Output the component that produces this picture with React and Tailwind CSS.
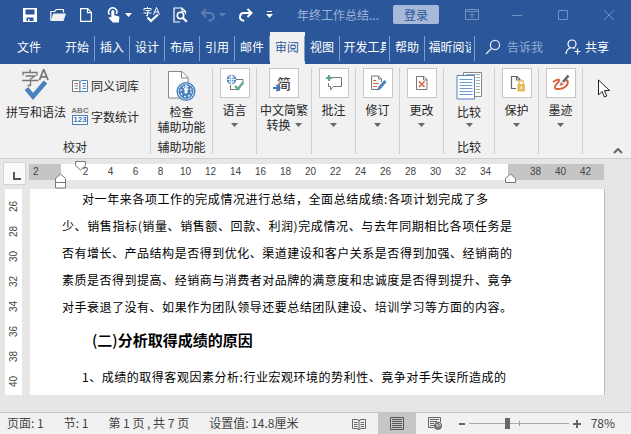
const tabs = [
  { name: '开始' },
  { name: '插入' },
  { name: '设计' },
  { name: '布局' },
  { name: '引用' },
  { name: '邮件' },
  { name: '审阅', active: true },
  { name: '视图' },
  { name: '开发工具', wide: true },
  { name: '帮助' },
  { name: '福昕阅读器', wide: true },
];

const rulerMarks = [2, 4, 6, 8, 10, 12, 14, 16, 18, 20, 22, 24, 26, 28, 30, 32, 34];
const rulerMarksRight = [38, 40, 42];
const sideMarks = [26, 28, 30, 32, 34, 36, 38, 40];

function Caret({ className = '' }) {
  return (
    <svg viewBox="0 0 7 4" className={`w-[7px] h-1 shrink-0 ${className}`} fill="currentColor" aria-hidden="true">
      <path d="M0 0h7L3.5 4z" />
    </svg>
  );
}

/* Title bar icons */

function SaveIcon() {
  return (
    <svg viewBox="0 0 16 16" className="size-4">
      <path d="M1 1h14v14H1z" fill="#fff" />
      <path d="M3.5 2.5h9v5h-9zM4.5 10.5h7V14h-4v-2H6v2H4.5z" fill="#2b579a" />
    </svg>
  );
}

function FolderIcon() {
  return (
    <svg viewBox="0 0 16 16" className="size-4">
      <path d="M.8 13.5V4.5h4l1.5-2h7.2v3" fill="none" stroke="#fff" strokeWidth="1.2" />
      <path d="M3.2 6.5H16L13.5 14H.8z" fill="#f1f1f1" />
    </svg>
  );
}

function NewIcon() {
  return (
    <svg viewBox="0 0 16 16" className="size-4" fill="none" stroke="#fff" strokeWidth="1.2">
      <path d="M2.6 1.6h7l3.8 3.8v9H2.6z" />
      <path d="M9.5 1.6v4h4" />
    </svg>
  );
}

function TouchIcon() {
  return (
    <svg viewBox="0 0 16 16" className="size-4">
      <path d="M3.5 7.5A4.1 4.1 0 1 1 10.3 7" fill="none" stroke="#fff" strokeWidth="1.5" />
      <path d="M5.3 4.6a1.5 1.5 0 0 1 3 0v3.6l4 1c.8.2 1.2.8 1.1 1.6l-.6 4.7H6.8L2.5 10.8c.6-1 1.6-1 2.8-.2z" fill="#fff" />
    </svg>
  );
}

function SpellSmallIcon() {
  return (
    <svg viewBox="0 0 18 16" className="w-[18px] h-4 -mx-px">
      <g fill="none" stroke="#fff" strokeWidth="1">
        <path d="M4.5 0v1.5M1 3.5v-2h7v2M2.5 3.5h4L4.5 5v4L3 8.5M.5 6h8" />
        <path d="M10.5 7.5l3-7 3 7M11.5 5h4" />
      </g>
      <path d="M4.5 10.5L8 14l7-6.5" fill="none" stroke="#fff" strokeWidth="2.2" />
    </svg>
  );
}

function PreviewIcon() {
  return (
    <svg viewBox="0 0 16 16" className="size-4" fill="none" stroke="#fff">
      <path d="M8 15H2V1h8l3.5 3.5V7M10 1v3.5h3.5" strokeWidth="1.2" />
      <circle cx="8.5" cy="8.5" r="3.2" strokeWidth="1.6" />
      <path d="M10.8 10.8l4 4" strokeWidth="2.2" />
    </svg>
  );
}

function UndoIcon() {
  return (
    <svg viewBox="0 0 16 16" className="size-4" fill="none" stroke="#5d7eb5" strokeWidth="2">
      <path d="M6 2L2 6l4 4" />
      <path d="M2.5 6H10a3.7 3.7 0 0 1 0 7.5H8.5" />
    </svg>
  );
}

function RedoIcon() {
  return (
    <svg viewBox="0 0 16 16" className="size-4" fill="none" stroke="#fff" strokeWidth="2">
      <path d="M9.5 2l4 4-4 4" />
      <path d="M13 6H6a3.8 3.8 0 0 0-1 7.5l1 .5" />
    </svg>
  );
}

/* Ribbon icons */

function SpellIcon() {
  return (
    <svg viewBox="0 0 30 34" className="w-[30px] h-[34px]" fill="none">
      <g stroke="#777" strokeWidth="1.3">
        <path d="M8.5 1.5l1 2.5M2 7.5v-3h14v3M4.5 8H14l-4.5 3v6.500h-3M1 12.5h16.5" />
        <path d="M18.5 12l4-10h.5l4 10M20 8.8h5.5" strokeWidth="1.8" />
      </g>
      <path d="M5.5 20.5l6.500 8L24.500 14" stroke="#4a82bd" strokeWidth="4.6" />
    </svg>
  );
}

function ThesaurusIcon() {
  return (
    <svg viewBox="0 0 16 14" className="w-4 h-[14px]">
      <path d="M.5 1.5h6l1.5 1V13l-1.5-.5h-6z" fill="#fff" stroke="#777" />
      <path d="M8 2.5l1.5-1h6v11h-6L8 13z" fill="#fff" stroke="#4a82bd" />
      <path d="M2.5 4.5H6" stroke="#d9623f" />
      <path d="M2.5 7H6M2.5 9.5H6" stroke="#888" />
      <path d="M10.5 4.5H14M10.5 7H14M10.5 9.5H14" stroke="#4a82bd" />
    </svg>
  );
}

function WordCountIcon() {
  return (
    <span className="w-4 flex flex-col items-center font-['Liberation_Sans'] text-[8px] leading-[8px] font-bold" aria-hidden="true">
      <span className="text-[#777]">ABC</span>
      <span className="w-4 flex justify-center border border-[#4a82bd] bg-white text-[#3f75b0]">123</span>
    </span>
  );
}

function AccessibilityIcon() {
  return (
    <svg viewBox="0 0 30 34" className="w-[30px] h-[34px]" fill="none">
      <path d="M2.5 3.5H16l6 6V30H2.5z" fill="#fff" stroke="#888" />
      <path d="M15.5 3.5V10H22" stroke="#888" />
      <circle cx="20" cy="23.5" r="8.8" fill="#fff" stroke="#4a82bd" strokeWidth="1.5" />
      <circle cx="20" cy="23.5" r="7.4" fill="#4a82bd" />
      <circle cx="20" cy="23.5" r="5.2" stroke="#fff" strokeWidth="1.3" strokeDasharray="1.8 2.3" />
      <path d="M20 16.5v6M18 20.5l2 2.5 2-2.5" stroke="#fff" strokeWidth="1.4" />
      <circle cx="20" cy="24" r="1.6" fill="#fff" />
    </svg>
  );
}

function LanguageIcon() {
  return (
    <svg viewBox="0 0 18 18" className="size-[18px]" fill="none">
      <path d="M10 5.5h7v5M4.5 11v4.5h9" stroke="#777" />
      <circle cx="5.5" cy="5.5" r="4.8" fill="#4a82bd" />
      <path d="M5.5 1v9M1 5.5h9M2.5 2.8q3 1.2 6 0M2.5 8.2q3-1.2 6 0M5.5 1q-4 4.5 0 9M5.5 1q4 4.5 0 9" stroke="#fff" strokeWidth=".8" />
      <path d="M9 12l3 3 5-6.5" stroke="#5fa98a" strokeWidth="2.2" />
    </svg>
  );
}

function ConvertIcon() {
  return (
    <span className="relative text-[14px] leading-[18px] text-[#444] font-medium" aria-hidden="true">
      简
      <svg viewBox="0 0 8 8" className="absolute -left-1 bottom-0 size-2" fill="none" stroke="#3f75b0" strokeWidth="2">
        <path d="M0 4h6M3.5 1l3 3-3 3" />
      </svg>
    </span>
  );
}

function CommentIcon() {
  return (
    <svg viewBox="0 0 18 18" className="size-[18px]" fill="none">
      <path d="M7 3.5h9.5v9h-8l-3 3.5v-3.5h-2V9" stroke="#777" />
      <path d="M4 1v6M1 4h6" stroke="#5fa98a" strokeWidth="2.2" />
    </svg>
  );
}

function TrackIcon() {
  return (
    <svg viewBox="0 0 18 18" className="size-[18px]" fill="none">
      <path d="M12.5 8V5l-3-3h-7v13.5H9M9.500 2v3h3" stroke="#777" />
      <path d="M4 6.5h3M4 9.5h6M4 12.5h4" stroke="#d9623f" />
      <path d="M10 14.5L16.5 7" stroke="#4a82bd" strokeWidth="3" />
      <path d="M8 16.5l1-3 2 2z" fill="#3f75b0" />
    </svg>
  );
}

function ChangesIcon() {
  return (
    <svg viewBox="0 0 18 18" className="size-[18px]" fill="none">
      <path d="M3.5 2.5H11l3 3v10H3.5zM10.5 2.5V6H14" stroke="#777" />
      <path d="M6 7.5l5.5 5.5M11.5 7.5L6 13" stroke="#d9623f" strokeWidth="1.6" />
    </svg>
  );
}

function CompareIcon() {
  return (
    <svg viewBox="0 0 26 34" className="w-[26px] h-[34px]" fill="none">
      <path d="M7.5 4.5h18v24h-18z" fill="#fff" stroke="#888" />
      <path d="M20 9.5h4M20 12.5h4M20 15.5h4M20 18.5h4M20 21.5h4M20 24.5h4M10 6.5h14" stroke="#aaa" />
      <path d="M1 7.5h17.500V31H1z" fill="#fff" stroke="#4a82bd" />
      <path d="M3.5 11.5h13M3.5 14.5h13M3.5 17.5h13M3.5 20.5h13M3.5 23.5h13M3.5 26.5h13" stroke="#6b9bd0" />
    </svg>
  );
}

function ProtectIcon() {
  return (
    <svg viewBox="0 0 18 18" className="size-[18px]" fill="none">
      <path d="M8 14.5H3.5v-12H9l3 3v2M8.500 2.500V6H12" stroke="#666" strokeWidth="1.2" />
      <path d="M11 10V8.500a2.200 2.200 0 0 1 4.400 0V10" stroke="#e6b961" strokeWidth="1.4" />
      <path d="M9.500 10H17v7.500H9.500z" fill="#e6b961" />
      <path d="M13.200 12v3" stroke="#fff" />
    </svg>
  );
}

function InkIcon() {
  return (
    <svg viewBox="0 0 18 18" className="size-[18px]" fill="none">
      <path d="M1 8c4-3 7-3 6-1s-5 5-4 7 7 1 10-1 4-6 1-7" stroke="#d9623f" strokeWidth="2" />
      <path d="M16.5 1.5L11 8" stroke="#666" strokeWidth="2.6" />
      <path d="M7.5 12L9 8l3 2.5z" fill="#d9623f" />
    </svg>
  );
}

function Group({ className, title, children }) {
  return (
    <section className={`shrink-0 flex flex-col items-center border-r border-[#d0d0d0] ${className}`}>
      {children}
      {title && <h2 className="mt-auto">{title}</h2>}
    </section>
  );
}

function BoxButton({ icon, label, second }) {
  return (
    <button className="flex flex-col items-center whitespace-nowrap">
      <span className="size-[30px] mb-1 flex items-center justify-center bg-white border border-[#c6c6c6]">{icon}</span>
      {label}
      <span className="h-[15px] flex items-center gap-1">
        {second}
        <Caret className="text-[#666]" />
      </span>
    </button>
  );
}

function BigButton({ icon, children }) {
  return (
    <button className="flex flex-col items-center whitespace-nowrap">
      <span className="h-9">{icon}</span>
      {children}
    </button>
  );
}

function TitleBar() {
  return (
    <header className="h-8 pl-[22px] pb-[3px] flex items-center text-[#9db3d8]">
      <div className="flex items-center gap-3 text-white">
        <button aria-label="保存"><SaveIcon /></button>
        <button aria-label="打开"><FolderIcon /></button>
        <button aria-label="新建"><NewIcon /></button>
        <button aria-label="触摸模式" className="w-[26px] flex items-center justify-between"><TouchIcon /><Caret /></button>
        <button aria-label="拼写检查"><SpellSmallIcon /></button>
        <button aria-label="打印预览"><PreviewIcon /></button>
        <button aria-label="撤消" className="w-[26px] flex items-center justify-between text-[#5d7eb5]"><UndoIcon /><Caret /></button>
        <button aria-label="恢复"><RedoIcon /></button>
        <button aria-label="自定义快速访问工具栏" className="flex flex-col items-center gap-[2px] w-[7px]">
          <span className="w-[5px] h-px bg-white" />
          <Caret />
        </button>
      </div>
      <h1 className="ml-6 whitespace-nowrap">年终工作总结...</h1>
      <button className="ml-[14px] shrink-0 w-[46px] h-[19px] rounded-xs bg-[#a6b9d9] text-[#2b579a]">登录</button>
      <div className="ml-auto flex text-[#7591c2]">
        <button aria-label="功能区显示选项" className="w-[45px] flex justify-center">
          <svg viewBox="0 0 14 12" className="w-[14px] h-3" fill="none" stroke="currentColor">
            <path d="M.5 .5h13v10H.5zM.5 2.5h13M7 9V4.5M4.5 6.5L7 4.2l2.5 2.3" />
          </svg>
        </button>
        <button aria-label="最小化" className="w-[46px] flex justify-center">
          <svg viewBox="0 0 12 12" className="size-3" stroke="currentColor"><path d="M1 6.5h10" /></svg>
        </button>
        <button aria-label="最大化" className="w-[46px] flex justify-center">
          <svg viewBox="0 0 12 12" className="size-3" fill="none" stroke="currentColor"><path d="M1.5 1.5h9v9h-9z" /></svg>
        </button>
        <button aria-label="关闭" className="w-[45px] flex justify-center">
          <svg viewBox="0 0 12 12" className="size-3" stroke="currentColor"><path d="M1 1l10 10M11 1L1 11" /></svg>
        </button>
      </div>
    </header>
  );
}

function TabBar() {
  return (
    <nav className="h-8 flex items-stretch text-white">
      <button className="w-[60px] shrink-0 pr-[2px] pb-[3px]">文件</button>
      {tabs.map(t => (
        <button
          key={t.name}
          className={`shrink-0 flex items-center ${t.wide ? 'w-[50px]' : 'w-[35px]'} ${t.active ? 'bg-[#f1f1f1] text-[#2b579a]' : ''}`}
        >
          <span className="w-full h-[25px] pb-[3px] flex items-center justify-center border-r border-[#7f9fcb]">
            <span className={`overflow-hidden whitespace-nowrap text-left ${t.wide ? 'w-[42px]' : ''}`}>{t.name}</span>
          </span>
        </button>
      ))}
      <label className="ml-[10px] pb-[3px] flex items-center gap-[6px]">
        <svg viewBox="0 0 16 16" className="size-4 shrink-0" fill="none" stroke="#dbe4f2" strokeWidth="1.3">
          <circle cx="10" cy="6" r="4.6" />
          <path d="M6.7 9.3L1 15" />
        </svg>
        <input className="w-10 bg-transparent outline-none placeholder:text-[#93acd5]" placeholder="告诉我" aria-label="告诉我" />
      </label>
      <button className="ml-auto mr-[22px] pb-[3px] shrink-0 flex items-center gap-1">
        <svg viewBox="0 0 16 16" className="size-4" fill="none" stroke="#fff" strokeWidth="1.2">
          <circle cx="7" cy="5" r="4" />
          <path d="M1 15c.3-3.5 2-5.500 4.500-6.300M8.500 8.700l1.500.8M12.500 9.500v6M9.500 12.500h6" />
        </svg>
        共享
      </button>
    </nav>
  );
}

function Ribbon() {
  return (
    <div className="relative pt-1 pb-1 flex bg-[#f1f1f1] border-b border-[#cfcfcf] leading-[15px] text-[#262626]">
      <Group className="w-[151px] min-h-[86px]" title="校对">
        <div className="w-full pl-[6px] flex gap-[6px]">
          <BigButton icon={<SpellIcon />}>拼写和语法</BigButton>
          <div className="pt-[10px] flex flex-col gap-[14px]">
            <button className="flex items-center gap-[3px]"><ThesaurusIcon />同义词库</button>
            <button className="flex items-center gap-[3px]"><WordCountIcon />字数统计</button>
          </div>
        </div>
      </Group>
      <Group className="w-[62px]" title="辅助功能">
        <BigButton icon={<AccessibilityIcon />}>
          <span>检查</span>
          <span>辅助功能</span>
        </BigButton>
      </Group>
      <Group className="w-11"><BoxButton icon={<LanguageIcon />} label="语言" /></Group>
      <Group className="w-[55px]"><BoxButton icon={<ConvertIcon />} label="中文简繁" second="转换" /></Group>
      <Group className="w-11"><BoxButton icon={<CommentIcon />} label="批注" /></Group>
      <Group className="w-11"><BoxButton icon={<TrackIcon />} label="修订" /></Group>
      <Group className="w-11"><BoxButton icon={<ChangesIcon />} label="更改" /></Group>
      <Group className="w-[51px]" title="比较">
        <BigButton icon={<CompareIcon />}>
          <span>比较</span>
          <Caret className="mt-1 text-[#666]" />
        </BigButton>
      </Group>
      <Group className="w-11"><BoxButton icon={<ProtectIcon />} label="保护" /></Group>
      <Group className="w-11"><BoxButton icon={<InkIcon />} label="墨迹" /></Group>
      <button aria-label="折叠功能区" className="ml-auto mr-2 self-end">
        <svg viewBox="0 0 10 6" className="w-[10px] h-[6px]" fill="none" stroke="#666" strokeWidth="2"><path d="M1 5l4-4 4 4" /></svg>
      </button>
      {/* Mouse pointer */}
      <svg viewBox="0 0 12 19" className="absolute right-[21px] top-[15px] w-3 h-[19px]" fill="#fff" stroke="#222">
        <path d="M.5 1v15L4 12.5 6.5 18l2.300-1-2.300-5.500h5z" />
      </svg>
    </div>
  );
}

function Ruler() {
  return (
    <div className="relative h-[30px] flex items-start font-['Liberation_Sans'] text-[10px] text-[#444]">
      <button aria-label="制表符" className="ml-[3px] mt-[3px] size-[23px] shrink-0 flex items-center justify-center bg-[#fafafa] border border-[#d4d4d4]">
        <svg viewBox="0 0 8 8" className="mt-1 ml-1 size-2" fill="none" stroke="#555" strokeWidth="2"><path d="M1 0v7h7" /></svg>
      </button>
      <div className="ml-[3px] mr-[27px] mt-[5px] h-4 flex-1 flex leading-4 overflow-hidden">
        <span className="w-8 pl-1 shrink-0 bg-[#c5c5c5]">2</span>
        <div className="w-[447px] pl-3 shrink-0 flex bg-white">
          {rulerMarks.map(n => <span key={n} className="w-[25px] text-center">{n}</span>)}
        </div>
        <div className="flex-1 pl-[15px] flex bg-[#c5c5c5]">
          {rulerMarksRight.map(n => <span key={n} className="w-[25px] text-center">{n}</span>)}
        </div>
      </div>
      {/* Indent markers */}
      <svg viewBox="0 0 12 10" className="absolute left-[75px] top-[2px] w-3 h-[10px]" fill="#fff" stroke="#777">
        <path d="M.5 .5h10v4l-5 4.5-5-4.5z" />
      </svg>
      <svg viewBox="0 0 12 16" className="absolute left-[55px] top-[14px] w-3 h-4" fill="#fff" stroke="#777">
        <path d="M.5 9.5v-4l5-4.5 5 4.5v4zM.5 9.5h10V15H.5z" />
      </svg>
      <svg viewBox="0 0 12 10" className="absolute left-[505px] top-[14px] w-3 h-[10px]" fill="#fff" stroke="#777">
        <path d="M.5 9.5v-4l5-4.5 5 4.5v4z" />
      </svg>
    </div>
  );
}

function Document() {
  return (
    <main className="flex-1 flex items-start pb-[17px]">
      <div className="ml-[5px] w-[17px] shrink-0 self-stretch pt-[5px] bg-white flex flex-col items-center font-['Liberation_Sans'] text-[10px] leading-3 text-[#444]">
        {sideMarks.map(n => (
          <span key={n} className="h-[25px] text-center [writing-mode:vertical-rl] rotate-180">{n}</span>
        ))}
      </div>
      <article className="ml-2 mr-[26px] flex-1 self-stretch pl-8 pr-[92px] bg-white border-r border-[#bdbdbd] text-black overflow-hidden">
        <div className="-mt-1 leading-[27px] whitespace-nowrap text-justify [text-align-last:justify]">
          <p className="pl-5 pr-6">对一年来各项工作的完成情况进行总结，全面总结成绩:各项计划完成了多</p>
          <p>少、销售指标(销量、销售额、回款、利润)完成情况、与去年同期相比各项任务是</p>
          <p>否有增长、产品结构是否得到优化、渠道建设和客户关系是否得到加强、经销商的</p>
          <p>素质是否得到提高、经销商与消费者对品牌的满意度和忠诚度是否得到提升、竟争</p>
          <p>对手衰退了没有、如果作为团队领导还要总结团队建设、培训学习等方面的内容。</p>
        </div>
        <h2 className="pl-[30px] text-[15px] leading-10 font-bold">
          <span className="font-medium">(二)</span>分析取得成绩的原因
        </h2>
        <p className="pl-5 pr-[6px] leading-[34px] whitespace-nowrap text-justify [text-align-last:justify]">
          1、成绩的取得客观因素分析:行业宏观环境的势利性、竟争对手失误所造成的
        </p>
      </article>
    </main>
  );
}

function StatusBar() {
  return (
    <footer className="h-[22px] pl-[7px] flex items-center bg-[#f1f1f1] border-t border-[#c6c6c6] text-[#444] whitespace-nowrap">
      <div className="flex gap-5 pb-px">
        <span>页面: 1</span>
        <span>节: 1</span>
        <span>第 1 页 , 共 7 页</span>
        <span>设置值: 14.8厘米</span>
      </div>
      <div className="ml-auto mr-4 h-full flex items-center">
        <button aria-label="阅读视图" className="w-[38px] h-full flex items-center justify-center">
          <svg viewBox="0 0 14 12" className="w-[14px] h-3" fill="none" stroke="#666">
            <path d="M.5 1.5H5l2 1 2-1h4.5v9H9l-2 1-2-1H.5zM7 2v10M2 4.5h3.5M2 6.5h3.5M2 8.5h3.5M8.5 4.5H12M8.5 6.5H12M8.5 8.5H12" />
          </svg>
        </button>
        <button aria-label="页面视图" className="w-[38px] h-full flex items-center justify-center bg-[#c6c6c6]">
          <svg viewBox="0 0 14 13" className="w-[14px] h-[13px]" fill="none" stroke="#555">
            <path d="M.5 .5h13v12H.5zM2 2.5h10M2 4.5h10M2 6.5h10M2 8.5h10M2 10.5h10" />
          </svg>
        </button>
        <button aria-label="Web 版式视图" className="w-[38px] h-full flex items-center justify-center">
          <svg viewBox="0 0 14 13" className="w-[14px] h-[13px]" fill="none" stroke="#666">
            <path d="M12.5 5V.5H.5v10H6M2 2.5h9M2 4.5h7M2 6.5h4M2 8.5h4" />
            <circle cx="10" cy="8.8" r="3.6" fill="#777" />
            <path d="M8 7l2 1-1 2M11 6l1.5 2L11 9.5" stroke="#ddd" />
          </svg>
        </button>
        <button aria-label="缩小" className="ml-[5px] w-[6px] h-[2px] bg-[#666]" />
        <span className="relative mx-1 w-[100px] h-full flex items-center">
          <span className="absolute left-[50px] top-[8px] w-px h-[5px] bg-[#999]" />
          <input
            type="range"
            aria-label="显示比例"
            defaultValue="38"
            className="relative w-full h-[11px] appearance-none bg-transparent [&::-webkit-slider-runnable-track]:h-px [&::-webkit-slider-runnable-track]:bg-[#aaa] [&::-webkit-slider-thumb]:appearance-none [&::-webkit-slider-thumb]:w-[5px] [&::-webkit-slider-thumb]:h-[11px] [&::-webkit-slider-thumb]:-mt-[5px] [&::-webkit-slider-thumb]:bg-[#666]"
          />
        </span>
        <button aria-label="放大">
          <svg viewBox="0 0 8 8" className="size-2" stroke="#666" strokeWidth="2"><path d="M4 0v8M0 4h8" /></svg>
        </button>
        <span className="ml-[10px] pb-px">78%</span>
      </div>
    </footer>
  );
}

export default function App() {
  return (
    <div className="min-h-screen flex flex-col bg-[#e6e6e6] font-['Noto_Sans_CJK_SC',sans-serif] text-[12px] leading-4 overflow-hidden">
      <div className="bg-[#2b579a]">
        <TitleBar />
        <TabBar />
      </div>
      <Ribbon />
      <Ruler />
      <Document />
      <StatusBar />
    </div>
  );
}
